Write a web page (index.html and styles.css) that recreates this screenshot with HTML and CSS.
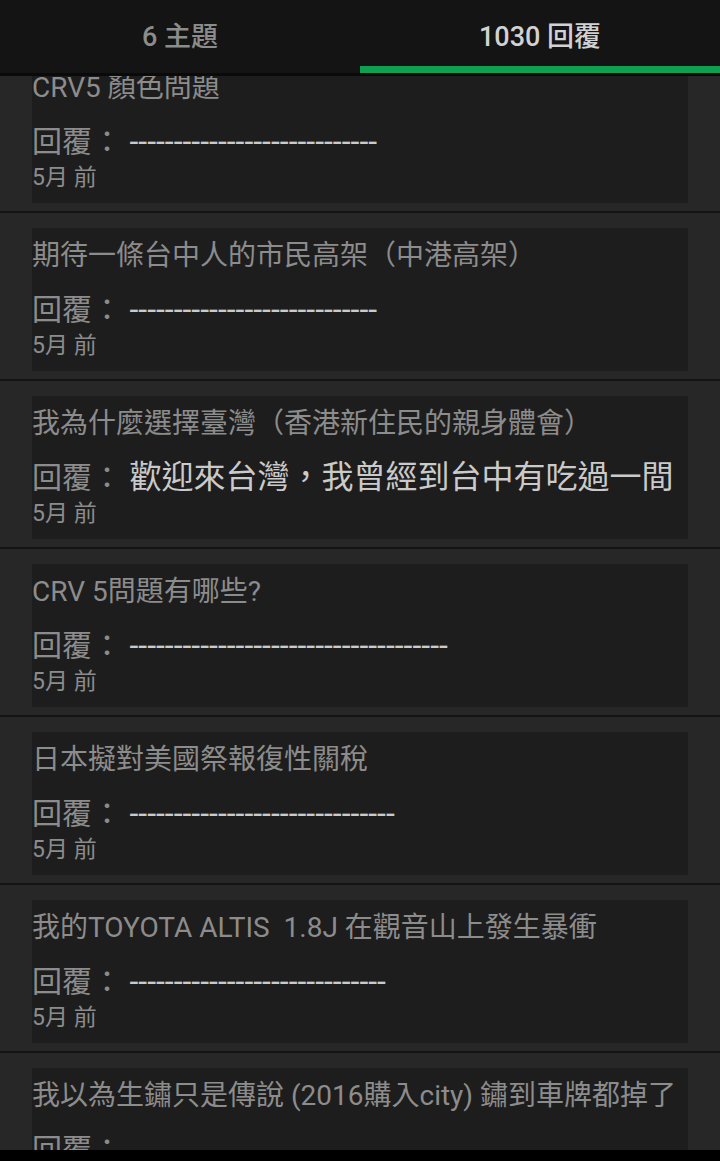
FILE: index.html
```html
<!DOCTYPE html>
<html lang="zh-Hant">
<head>
<meta charset="utf-8">
<title>回覆</title>
<link rel="stylesheet" href="styles.css">
</head>
<body>
<div class="screen">
  <header class="tabs">
    <div class="tab">6 主題</div>
    <div class="tab active">1030 回覆</div>
  </header>
  <main class="list">
    <div class="list-inner">
      <div class="item">
        <div class="card">
          <div class="title">CRV5 顏色問題</div>
          <div class="reply"><span class="label">回覆： </span><span class="content">----------------------------</span></div>
          <div class="time">5月 前</div>
        </div>
      </div>
      <div class="item">
        <div class="card">
          <div class="title">期待一條台中人的市民高架（中港高架）</div>
          <div class="reply"><span class="label">回覆： </span><span class="content">----------------------------</span></div>
          <div class="time">5月 前</div>
        </div>
      </div>
      <div class="item">
        <div class="card">
          <div class="title">我為什麼選擇臺灣（香港新住民的親身體會）</div>
          <div class="reply"><span class="label">回覆： </span><span class="content">歡迎來台灣，我曾經到台中有吃過一間</span></div>
          <div class="time">5月 前</div>
        </div>
      </div>
      <div class="item">
        <div class="card">
          <div class="title">CRV 5問題有哪些?</div>
          <div class="reply"><span class="label">回覆： </span><span class="content">------------------------------------</span></div>
          <div class="time">5月 前</div>
        </div>
      </div>
      <div class="item">
        <div class="card">
          <div class="title">日本擬對美國祭報復性關稅</div>
          <div class="reply"><span class="label">回覆： </span><span class="content">------------------------------</span></div>
          <div class="time">5月 前</div>
        </div>
      </div>
      <div class="item">
        <div class="card">
          <div class="title">我的TOYOTA ALTIS&nbsp; 1.8J 在觀音山上發生暴衝</div>
          <div class="reply"><span class="label">回覆： </span><span class="content">-----------------------------</span></div>
          <div class="time">5月 前</div>
        </div>
      </div>
      <div class="item">
        <div class="card">
          <div class="title">我以為生鏽只是傳說 (2016購入city) 鏽到車牌都掉了</div>
          <div class="reply"><span class="label">回覆： </span><span class="content"></span></div>
          <div class="time">5月 前</div>
        </div>
      </div>
    </div>
  </main>
  <div class="navbar"></div>
</div>
</body>
</html>
```
FILE: styles.css
```css
* {
  box-sizing: border-box;
}

html, body {
  margin: 0;
  padding: 0;
  background: #000;
}

body {
  font-family: Roboto, "Noto Sans CJK TC", "Noto Sans CJK SC", sans-serif;
}

.screen {
  width: 720px;
  height: 1161px;
  display: flex;
  flex-direction: column;
  background: #272727;
  overflow: hidden;
}

.tabs {
  flex: 0 0 auto;
  display: flex;
  background: #141414;
  border-bottom: 3px solid #0a0a0a;
}

.tab {
  flex: 1 1 0;
  height: 73px;
  padding-top: 2px;
  display: flex;
  align-items: center;
  justify-content: center;
  font-size: 27px;
  font-weight: 500;
  color: #8c8c8c;
  border-bottom: 7px solid transparent;
}

.tab.active {
  color: #d2d2d2;
  border-bottom-color: #0e9f51;
}

.list {
  flex: 1 1 auto;
  overflow: hidden;
  min-height: 0;
}

.list-inner {
  margin-top: -31px;
}

.item {
  padding: 15px 32px 8px;
  border-bottom: 2px solid #131313;
}

.card {
  background: #1d1d1d;
  height: 143px;
  padding-top: 9px;
  color: #8c8c8c;
  white-space: nowrap;
}

.title {
  font-size: 28px;
  line-height: 38px;
}

.reply {
  margin-top: 14px;
  line-height: 40px;
  height: 40px;
}

.label {
  font-size: 30px;
}

.content {
  font-size: 32px;
  color: #cacaca;
}

.time {
  font-size: 23px;
  line-height: 32px;
  margin-top: 1px;
}

.navbar {
  flex: 0 0 11px;
  background: #000;
}
```
